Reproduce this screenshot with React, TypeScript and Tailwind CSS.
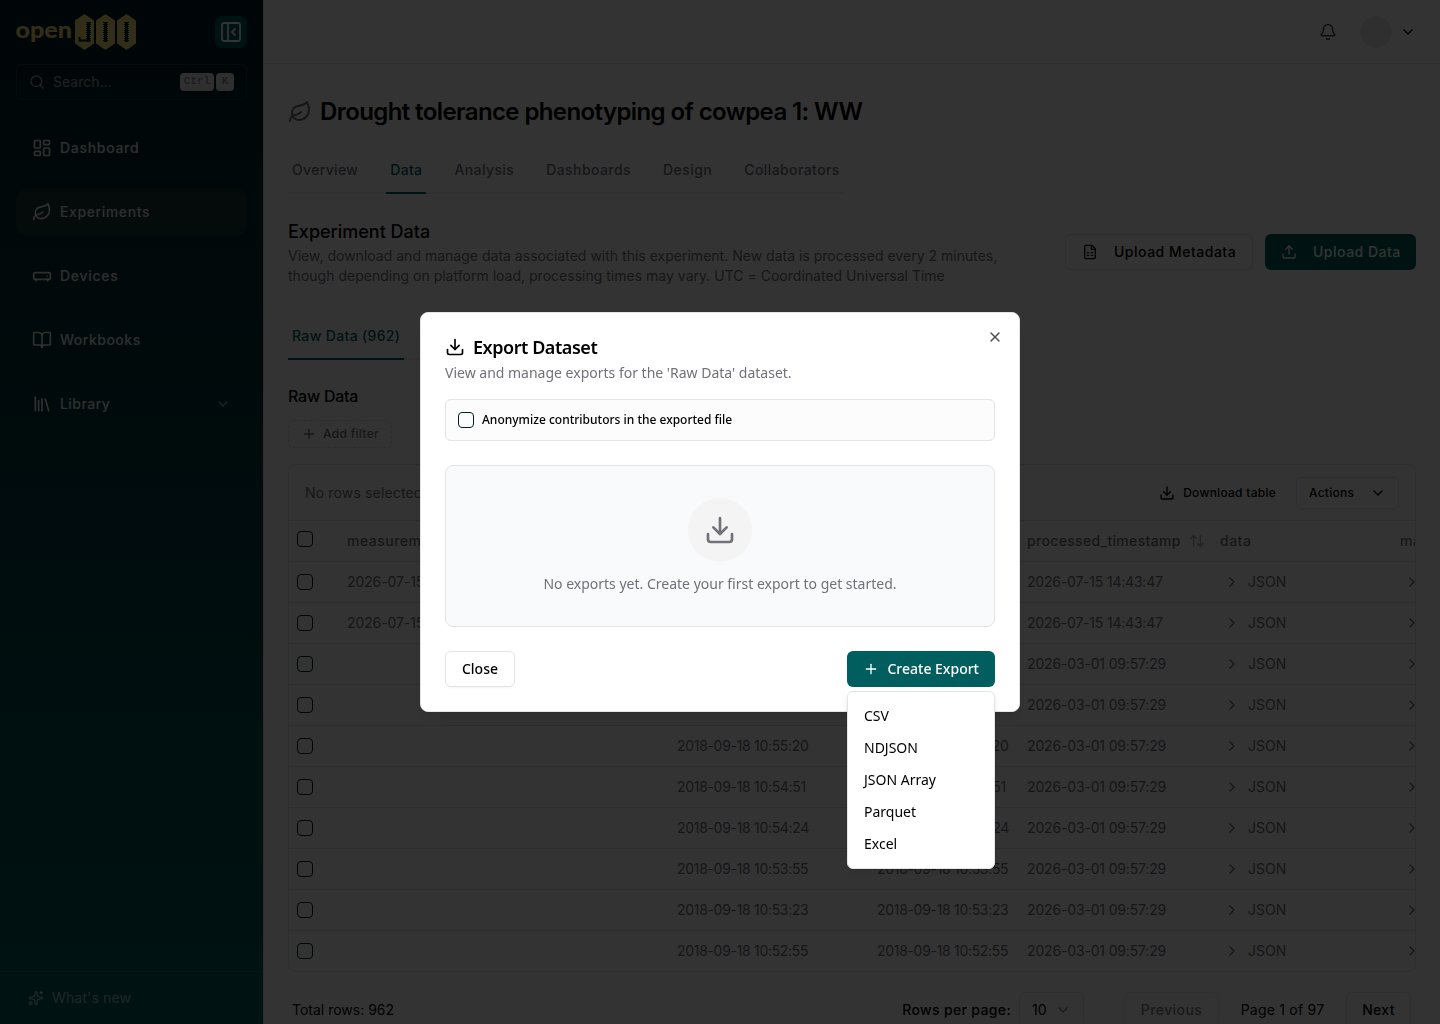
import {
  ArrowUpDown,
  Bell,
  BookOpen,
  ChevronDown,
  ChevronRight,
  Download,
  FileSpreadsheet,
  LayoutDashboard,
  Leaf,
  Library,
  PanelLeftClose,
  Plus,
  RadioReceiver,
  Search,
  Sparkles,
  Upload,
  X,
} from 'lucide-react';

const navItems = [
  { label: 'Dashboard', icon: LayoutDashboard, tracking: 'tracking-[0.7px]' },
  { label: 'Experiments', icon: Leaf, active: true, tracking: 'tracking-[0.6px]' },
  { label: 'Devices', icon: RadioReceiver, tracking: 'tracking-[0.7px]' },
  { label: 'Workbooks', icon: BookOpen, tracking: 'tracking-[0.5px]' },
  { label: 'Library', icon: Library, expandable: true, tracking: 'tracking-[0.45px]' },
];

const tabs = [
  { label: 'Overview', tracking: 'tracking-[0.33px]' },
  { label: 'Data', tracking: 'tracking-[0.35px]' },
  { label: 'Analysis', tracking: 'tracking-[0.4px]' },
  { label: 'Dashboards', tracking: 'tracking-[0.42px]' },
  { label: 'Design', tracking: 'tracking-[0.45px]' },
  { label: 'Collaborators', tracking: 'tracking-[0.42px]' },
];

const rows = [
  { measured: '2026-07-15 14:43:46', start: '', end: '', processed: '2026-07-15 14:43:47' },
  { measured: '2026-07-15 14:43:46', start: '', end: '', processed: '2026-07-15 14:43:47' },
  { measured: '', start: '2018-09-18 10:56:20', end: '2018-09-18 10:56:20', processed: '2026-03-01 09:57:29' },
  { measured: '', start: '2018-09-18 10:55:48', end: '2018-09-18 10:55:48', processed: '2026-03-01 09:57:29' },
  { measured: '', start: '2018-09-18 10:55:20', end: '2018-09-18 10:55:20', processed: '2026-03-01 09:57:29' },
  { measured: '', start: '2018-09-18 10:54:51', end: '2018-09-18 10:54:51', processed: '2026-03-01 09:57:29' },
  { measured: '', start: '2018-09-18 10:54:24', end: '2018-09-18 10:54:24', processed: '2026-03-01 09:57:29' },
  { measured: '', start: '2018-09-18 10:53:55', end: '2018-09-18 10:53:55', processed: '2026-03-01 09:57:29' },
  { measured: '', start: '2018-09-18 10:53:23', end: '2018-09-18 10:53:23', processed: '2026-03-01 09:57:29' },
  { measured: '', start: '2018-09-18 10:52:55', end: '2018-09-18 10:52:55', processed: '2026-03-01 09:57:29' },
];

const formats = ['CSV', 'NDJSON', 'JSON Array', 'Parquet', 'Excel'];

const gridCols = 'grid grid-cols-[50px_330px_200px_150px_193px_180px_180px]';

const Logo = () => (
  <svg width="120" height="36" viewBox="0 0 120 36" className="text-[#f4df6d]">
    <text x="-0.5" y="23.5" fontSize="22.5" fontWeight="900" fill="currentColor" fontFamily="Lato, sans-serif" textLength="56.5" lengthAdjust="spacingAndGlyphs">open</text>
    {[59, 80, 101].map((x) => (
      <path key={x} transform={`translate(${x} 0)`} fill="currentColor" d="M9.5 0 19 6.5v23L9.5 36 0 29.5V6.5Z" />
    ))}
    <g stroke="#02201f" strokeWidth="3">
      <path d="M72.5 8v20M89.5 8v20M110.500 8v20" />
      <path d="M72.5 8v20M89.5 8v20M110.500 8v20" strokeWidth="5" strokeDasharray="1 1" />
      <path d="M63.5 23v3.500h8" fill="none" strokeWidth="2" />
    </g>
  </svg>
);

const Checkbox = () => <div className="h-4 w-4 shrink-0 rounded border border-[#001f1f]" />;

const Sidebar = () => (
  <aside className="flex h-full w-[264px] shrink-0 flex-col border-r border-gray-200 bg-gradient-to-b from-[#041e27] to-[#005e5e] text-white">
    <div className="flex h-16 items-center justify-between px-4">
      <Logo />
      <div className="flex h-8 w-8 items-center justify-center rounded-lg bg-[#005e5e]">
        <PanelLeftClose className="h-6 w-6" strokeWidth={1.8} />
      </div>
    </div>
    <div className="mx-4 flex h-9 items-center rounded-md border border-white/10 px-3 text-white/60">
      <Search className="h-4 w-4" />
      <span className="ml-2 flex-1 text-sm">Search…</span>
      <div className="flex gap-0.5 font-['Liberation_Mono'] text-[11px] leading-4 text-gray-500">
        <kbd className="flex h-[18px] w-[34px] justify-center rounded bg-[#ebebeb] font-[inherit]">Ctrl</kbd>
        <kbd className="flex h-[18px] w-[18px] justify-center rounded bg-[#ebebeb] font-[inherit]">K</kbd>
      </div>
    </div>
    <nav className="mt-6 flex flex-col gap-4 px-4">
      {navItems.map(({ label, icon: Icon, active, expandable, tracking }) => (
        <div key={label} className={`flex h-12 items-center rounded-xl px-4 ${active ? 'bg-[#f4df6d]/7' : ''}`}>
          <Icon className="h-5 w-5 text-white/90" />
          <span className={`ml-2 flex-1 text-sm font-medium text-white/90 ${tracking}`}>{label}</span>
          {expandable && <ChevronDown className="h-4 w-4 text-white/60" />}
        </div>
      ))}
    </nav>
    <div className="mt-auto flex h-[53px] items-center gap-2 border-t border-white/10 px-7 text-sm tracking-[0.15px] text-white/60">
      <Sparkles className="h-4 w-4" />
      What's new
    </div>
  </aside>
);

const DataTable = () => (
  <div className="mt-4 h-[508px] overflow-hidden rounded-lg border border-[#e4e4e7]">
    <div className="flex h-14 items-center border-b border-[#e4e4e7] px-4 text-sm">
      <span className="flex-1 tracking-[0.15px] text-[#71717a]">No rows selected</span>
      <span className="mr-5 flex items-center gap-2 text-xs font-medium tracking-[0.26px]">
        <Download className="h-4 w-4" />
        Download table
      </span>
      <span className="flex h-8 w-[103px] items-center justify-between rounded-md border border-[#e4e4e7] px-3 text-xs font-medium tracking-[0.25px] shadow-xs">
        Actions
        <ChevronDown className="h-4 w-4" />
      </span>
    </div>
    <div className={`${gridCols} h-[41px] whitespace-nowrap border-b border-[#e4e4e7] text-sm font-medium tracking-[0.5px] text-[#71717a]`}>
      <div className="px-2 pt-2.5"><Checkbox /></div>
      <div className="flex items-center px-2">measurement_time</div>
      <div className="flex items-center px-2">start_time</div>
      <div className="flex items-center px-2">end_time</div>
      <div className="flex items-center gap-2 px-2 tracking-[0.33px]">
        processed_timestamp
        <ArrowUpDown className="h-4 w-4 shrink-0 opacity-60" />
      </div>
      <div className="flex items-center px-2">data</div>
      <div className="flex items-center px-2">macro</div>
    </div>
    {rows.map((row, i) => (
      <div key={i} className={`${gridCols} h-[41px] items-center whitespace-nowrap border-b border-[#e4e4e7] text-sm text-[#71717a]`}>
        <div className="px-2"><Checkbox /></div>
        <div className="px-2 tracking-[-0.1px]">{row.measured}</div>
        <div className="px-2 tracking-[-0.31px]">{row.start}</div>
        <div className="px-2 tracking-[-0.31px]">{row.end}</div>
        <div className={`px-2 ${row.measured ? 'tracking-[-0.2px]' : 'tracking-[-0.16px]'}`}>{row.processed}</div>
        <div className="flex items-center gap-2 px-3"><ChevronRight className="h-4 w-4" />JSON</div>
        <div className="flex items-center gap-2 px-3"><ChevronRight className="h-4 w-4" />JSON</div>
      </div>
    ))}
  </div>
);

const ExportDialog = () => (
  <div className="fixed left-[420px] top-[312px] flex h-[400px] w-[600px] flex-col rounded-lg border border-[#e4e4e7] bg-white p-6 font-['Noto_Sans',sans-serif] shadow-lg">
    <X className="absolute right-4 top-4 h-4 w-4 text-[#4d4d4d]" />
    <h2 className="flex h-5 items-center gap-2 text-lg font-semibold tracking-tight">
      <Download className="h-5 w-5" />
      Export Dataset
    </h2>
    <p className="mt-1.5 text-sm leading-5 text-[#71717a]">View and manage exports for the 'Raw Data' dataset.</p>
    <label className="mt-4 flex h-[42px] shrink-0 items-center gap-2 rounded-md border border-[#e4e4e7] bg-[#fcfcfc] px-3 text-xs font-medium">
      <Checkbox />
      Anonymize contributors in the exported file
    </label>
    <div className="mt-6 flex h-[162px] shrink-0 flex-col items-center rounded-lg border border-[#e4e4e7] bg-[#f9fafb] pt-8">
      <div className="flex h-16 w-16 items-center justify-center rounded-full bg-[#f4f4f4] text-[#71717a]">
        <Download className="h-8 w-8" />
      </div>
      <p className="mt-3 text-sm leading-5 text-[#71717a]">No exports yet. Create your first export to get started.</p>
    </div>
    <div className="mt-6 flex justify-between text-sm font-medium">
      <button className="h-9 w-[70px] rounded-md border border-[#e4e4e7] shadow-xs">Close</button>
      <button className="flex h-9 w-[148px] items-center justify-between whitespace-nowrap rounded-md bg-[#005e5e] px-4 text-white">
        <Plus className="h-4 w-4" />
        Create Export
      </button>
    </div>
    <div className="absolute left-[426px] top-[378px] h-[178px] w-[148px] rounded-md border border-[#e4e4e7] bg-white p-2 shadow-md">
      {formats.map((format) => (
        <div key={format} className="flex h-8 items-center px-2 text-sm">{format}</div>
      ))}
    </div>
  </div>
);

export default function App() {
  return (
    <div className="flex h-[1024px] w-[1440px] overflow-hidden bg-white font-['Inter',sans-serif] text-black">
      <Sidebar />
      <main className="flex min-w-0 flex-1 flex-col">
        <header className="flex h-16 shrink-0 items-center justify-end border-b border-[#e4e4e7] px-6">
          <Bell className="mr-[23px] h-[18px] w-[18px] text-[#444]" />
          <div className="h-8 w-8 rounded-full bg-[#ebebeb]" />
          <ChevronDown className="ml-2 h-4 w-4" />
        </header>
        <div className="px-6 pt-8">
          <h1 className="flex h-8 items-center gap-2 text-2xl font-semibold tracking-tight">
            <Leaf className="h-6 w-6 text-[#71717a]" />
            Drought tolerance phenotyping of cowpea 1: WW
          </h1>
          <div className="mt-5 flex h-[46px] w-fit gap-6 border-b-2 border-[#eeeeef] text-sm font-medium text-[#71717a]">
            {tabs.map(({ label, tracking }) => (
              <div key={label} className={`-mb-0.5 h-[46px] px-1 pt-3 ${tracking} ${label === 'Data' ? 'border-b-2 border-[#005e5e] text-[#005e5e]' : ''}`}>
                {label}
              </div>
            ))}
          </div>
          <div className="mt-6 flex items-center">
            <div className="flex-1">
              <h2 className="text-lg font-medium leading-7">Experiment Data</h2>
              <p className="w-[730px] text-sm leading-5 tracking-[0.01px] text-[#71717a]">
                View, download and manage data associated with this experiment. New data is processed every 2 minutes, though depending on platform load, processing times may vary. UTC = Coordinated Universal Time
              </p>
            </div>
            <div className="flex gap-3 whitespace-nowrap text-sm font-medium tracking-[0.5px]">
              <button className="flex h-9 w-[188px] items-center gap-4 rounded-md border border-[#e4e4e7] px-4 shadow-xs">
                <FileSpreadsheet className="h-4 w-4 shrink-0" />
                Upload Metadata
              </button>
              <button className="flex h-9 w-[151px] items-center gap-4 rounded-md bg-[#005e5e] px-4 text-white">
                <Upload className="h-4 w-4 shrink-0" />
                Upload Data
              </button>
            </div>
          </div>
          <div className="mt-7 flex h-[46px] w-[734px] border-b-2 border-[#eeeeef]">
            <div className="h-[46px] border-b-2 border-[#005e5e] px-1 pt-3 text-sm font-medium tracking-[0.35px] text-[#005e5e]">Raw Data (962)</div>
          </div>
          <h3 className="mt-6 text-base font-medium leading-6 tracking-[-0.25px]">Raw Data</h3>
          <button className="mt-3 flex h-7 w-[104px] items-center gap-1.5 rounded-md border border-dashed border-[#e4e4e7] px-3 text-xs font-medium tracking-[0.3px] text-[#71717a]">
            <Plus className="h-4 w-4 shrink-0" />
            Add filter
          </button>
          <DataTable />
          <div className="mt-5 flex h-9 items-center pl-1 pr-[5px] text-sm">
            <span className="flex-1">Total rows: 962</span>
            <span className="font-medium tracking-[0.35px]">Rows per page:</span>
            <span className="ml-2 flex h-9 w-[65px] items-center justify-between rounded-md border border-[#e4e4e7] px-3">
              10
              <ChevronDown className="h-4 w-4 opacity-50" />
            </span>
            <span className="ml-10 flex h-9 w-[95px] items-center justify-center rounded-md border border-[#e4e4e7] font-medium tracking-[0.4px] opacity-50">Previous</span>
            <span className="flex w-[127px] justify-center tracking-[0.22px]">Page 1 of 97</span>
            <span className="flex h-9 w-[65px] items-center justify-center rounded-md border border-[#e4e4e7] font-medium tracking-[0.35px]">Next</span>
          </div>
        </div>
      </main>
      <div className="fixed inset-0 bg-black/80" />
      <ExportDialog />
    </div>
  );
}
